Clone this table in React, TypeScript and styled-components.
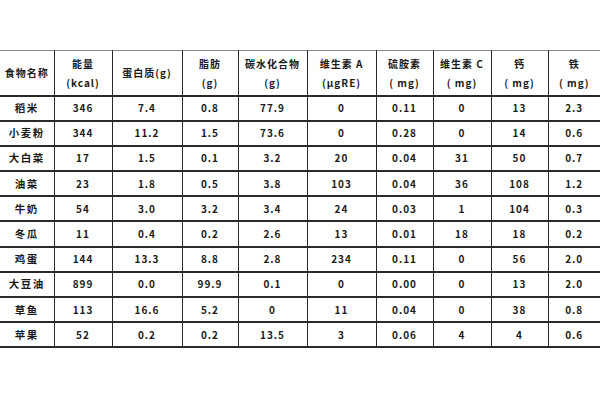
import React from "react";
import styled, { createGlobalStyle } from "styled-components";

const Global = createGlobalStyle`
  html, body { margin: 0; padding: 0; background: #ffffff; }
  body { font-family: "Noto Sans CJK SC", "Noto Sans", sans-serif; }
`;

const Page = styled.div`
  width: 600px;
  height: 400px;
  padding-top: 50px;
  box-sizing: border-box;
  background: #fff;
`;

const Table = styled.table`
  width: 600px;
  table-layout: fixed;
  border-collapse: collapse;
  border-top: 1px solid #8a8a8a;
  color: #1a1a1a;
  font-size: 10px;
  font-weight: 600;
  letter-spacing: 1px;
`;

const Col = styled.col<{ $w: number }>`
  width: ${(p) => p.$w}px;
`;

const HeadRow = styled.tr`
  height: 45px;
`;

const BodyRow = styled.tr`
  height: 25.2px;
`;

const Cell = styled.td<{ $first?: boolean }>`
  padding: 0;
  text-align: center;
  vertical-align: middle;
  border-bottom: 2px solid #2a2a2a;
  border-left: ${(p) => (p.$first ? "none" : "1.5px solid #2a2a2a")};
  line-height: 18px;
  white-space: nowrap;
  overflow: hidden;
`;

const HeadCell = styled(Cell).attrs({ as: "th" })`
  font-weight: 600;
  line-height: 19px;
`;

const CjkText = styled.span`
  font-size: 10.5px;
  letter-spacing: 1.5px;
`;

const widths = [54, 58, 70, 56, 69, 69, 57, 58, 57, 52];

const headers: string[][] = [
  ["食物名称"],
  ["能量", "(kcal)"],
  ["蛋白质(g)"],
  ["脂肪", "(g)"],
  ["碳水化合物", "(g)"],
  ["维生素 A", "(μgRE)"],
  ["硫胺素", "( mg)"],
  ["维生素 C", "( mg)"],
  ["钙", "( mg)"],
  ["铁", "( mg)"],
];

const rows: string[][] = [
  ["稻米", "346", "7.4", "0.8", "77.9", "0", "0.11", "0", "13", "2.3"],
  ["小麦粉", "344", "11.2", "1.5", "73.6", "0", "0.28", "0", "14", "0.6"],
  ["大白菜", "17", "1.5", "0.1", "3.2", "20", "0.04", "31", "50", "0.7"],
  ["油菜", "23", "1.8", "0.5", "3.8", "103", "0.04", "36", "108", "1.2"],
  ["牛奶", "54", "3.0", "3.2", "3.4", "24", "0.03", "1", "104", "0.3"],
  ["冬瓜", "11", "0.4", "0.2", "2.6", "13", "0.01", "18", "18", "0.2"],
  ["鸡蛋", "144", "13.3", "8.8", "2.8", "234", "0.11", "0", "56", "2.0"],
  ["大豆油", "899", "0.0", "99.9", "0.1", "0", "0.00", "0", "13", "2.0"],
  ["草鱼", "113", "16.6", "5.2", "0", "11", "0.04", "0", "38", "0.8"],
  ["苹果", "52", "0.2", "0.2", "13.5", "3", "0.06", "4", "4", "0.6"],
];

export default function App() {
  return (
    <Page>
      <Global />
      <Table>
        <colgroup>
          {widths.map((w, i) => (
            <Col key={i} $w={w} />
          ))}
        </colgroup>
        <thead>
          <HeadRow>
            {headers.map((h, i) => (
              <HeadCell key={i} $first={i === 0}>
                {h.map((line, j) => (
                  <div key={j}>{line}</div>
                ))}
              </HeadCell>
            ))}
          </HeadRow>
        </thead>
        <tbody>
          {rows.map((r, i) => (
            <BodyRow key={i}>
              {r.map((v, j) => (
                <Cell key={j} $first={j === 0}>
                  {j === 0 ? <CjkText>{v}</CjkText> : v}
                </Cell>
              ))}
            </BodyRow>
          ))}
        </tbody>
      </Table>
    </Page>
  );
}
